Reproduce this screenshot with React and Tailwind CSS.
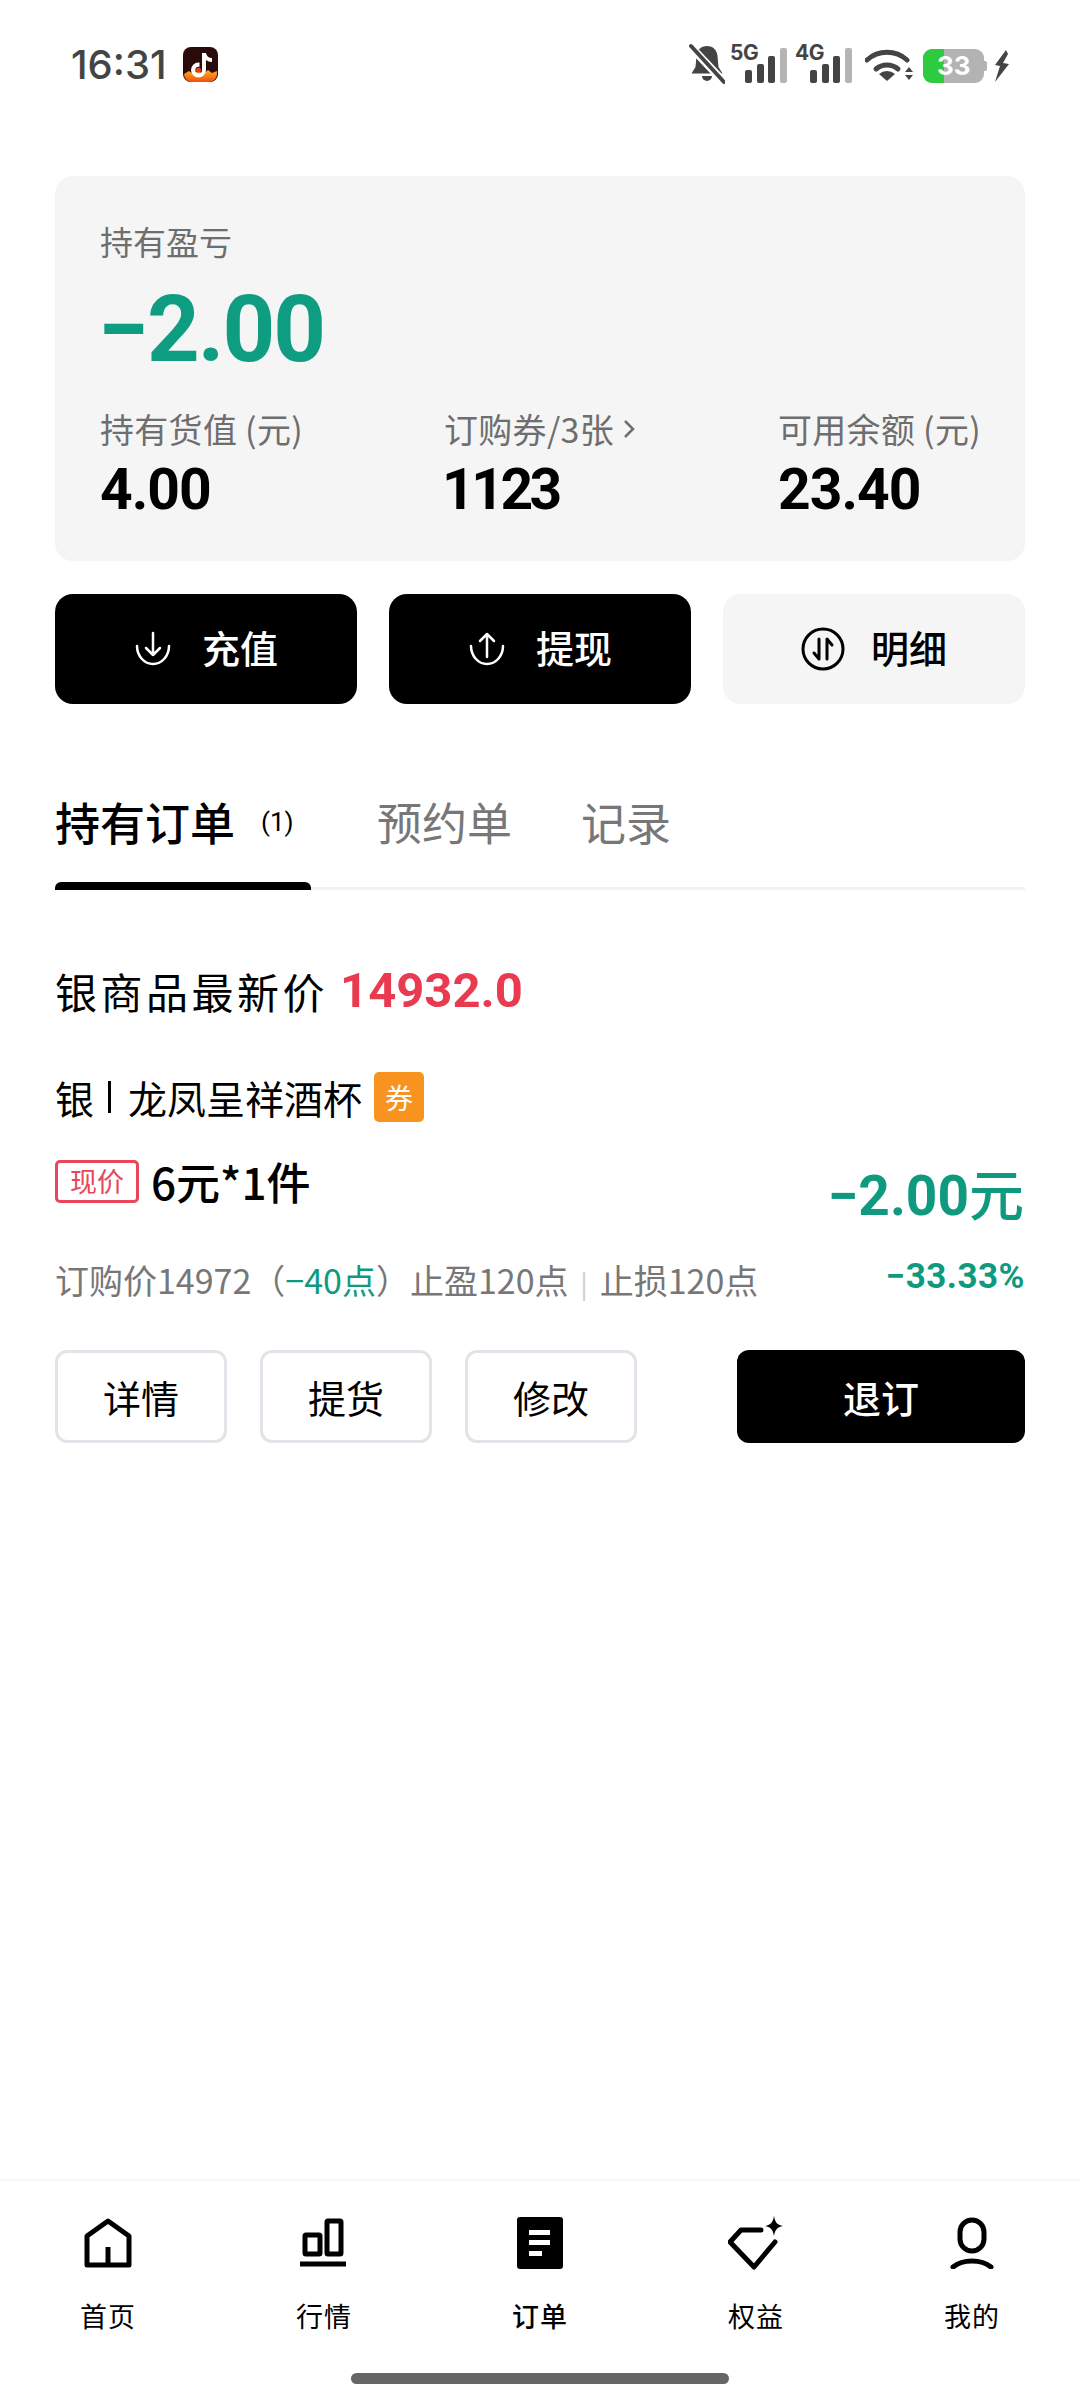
const cjk = { fontFamily: '"Noto Sans CJK SC", sans-serif' };
const num = { fontFamily: 'Roboto, "Noto Sans CJK SC", sans-serif' };

function Signal({ label }) {
  return (
    <svg width="58" height="50" viewBox="0 -8 58 50" className="-mt-[8px]">
      <text x="0" y="17" fontFamily="Inter, sans-serif" fontWeight="700" fontSize="21" letterSpacing="-0.5" fill="#444">{label}</text>
      <rect x="15" y="27" width="7" height="13" rx="2" fill="#444" />
      <rect x="27" y="21" width="7" height="19" rx="2" fill="#444" />
      <rect x="38" y="13" width="7" height="27" rx="2" fill="#444" />
      <rect x="50" y="5" width="7" height="35" rx="2" fill="#b5b5b5" />
    </svg>
  );
}

function StatusBar() {
  return (
    <div className="h-[176px] pt-[42px] pl-[71px] pr-[70px] flex justify-between items-start shrink-0">
      <div className="flex items-center mt-[2px]">
        <span className="text-[40px] leading-[42px] font-medium text-[#444] w-[112px]" style={{ fontFamily: 'Inter, sans-serif' }}>16:31</span>
        <svg width="36" height="38" viewBox="0 0 36 38">
          <defs>
            <linearGradient id="flame" x1="0" y1="0" x2="0" y2="1">
              <stop offset="0" stopColor="#ffb020" /><stop offset="1" stopColor="#f04e10" />
            </linearGradient>
          </defs>
          <rect x="0" y="1" width="35" height="35" rx="8" fill="#2a0a0a" />
          <path d="M1 28l5-3 4 3 5-3 5 3 5-4 4 3 5-2v3a8 8 0 0 1-8 8H9a8 8 0 0 1-8-8z" fill="url(#flame)" />
          <path d="M19 7h4c.5 3 3 5 6 5v4c-2.300 0-4.500-.8-6-2v10a7.500 7.500 0 1 1-7.500-7.500h1v4.200h-1a3.300 3.300 0 1 0 3.500 3.300z" fill="#fff" />
          <circle cx="15.500" cy="24" r="2.500" fill="#e0402a" />
        </svg>
      </div>
      <div className="flex items-center h-[44px]">
        <svg width="36" height="42" viewBox="0 0 36 42" className="mr-[5px]">
          <path d="M18 3c6 0 10 4 10.500 10l1 11 4 6.500H2.500l4-6.500 1-11C8 7 12 3 18 3z" fill="#444" />
          <path d="M13 33a5 5 0 0 0 10 0z" fill="#444" />
          <path d="M1 3l34 36" stroke="#fff" strokeWidth="8" />
          <path d="M2 3l33 36" stroke="#444" strokeWidth="4" strokeLinecap="round" />
        </svg>
        <Signal label="5G" />
        <div className="w-[7px]" />
        <Signal label="4G" />
        <svg width="50" height="36" viewBox="0 0 50 36" className="ml-[12px] mt-[3px]">
          <path d="M2 12a30 30 0 0 1 40 0" fill="none" stroke="#444" strokeWidth="5" strokeLinecap="round" />
          <path d="M11 21a17 17 0 0 1 22 0" fill="none" stroke="#444" strokeWidth="5" strokeLinecap="round" />
          <path d="M22 33l-8-7a12 12 0 0 1 16 0z" fill="#444" />
          <path d="M40 24l4-5 4 5zM40 27l4 5 4-5z" fill="#444" />
        </svg>
        <div className="relative w-[64px] h-[34px] ml-[8px] mt-[3px] flex items-center">
          <div className="w-[61px] h-[34px] rounded-[9px] bg-[#b3b3b3] overflow-hidden">
            <div className="w-[21px] h-full bg-[#2ecb3f]" />
          </div>
          <div className="w-[3px] h-[10px] bg-[#b3b3b3] rounded-r-[2px]" />
          <span className="absolute left-[14px] top-0 text-[26px] leading-[34px] font-bold text-white" style={{ fontFamily: 'Inter, sans-serif' }}>33</span>
        </div>
        <svg width="16" height="32" viewBox="0 0 16 32" className="ml-[7px] mt-[3px]">
          <path d="M12 0L1 15l5 1-5 16 14-18-6-1 5-9z" fill="#444" />
        </svg>
      </div>
    </div>
  );
}

function Stat({ label, value, className, valueClass, chevron }) {
  return (
    <div className={className}>
      <div className="text-[34px] leading-[40px] tracking-[0.3px] text-[#6e6e6e] flex items-center whitespace-nowrap" style={cjk}>
        {label}
        {chevron && (
          <svg width="14" height="24" viewBox="0 0 14 24" className="ml-[8px]">
            <path d="M3 4l8 8-8 8" fill="none" stroke="#6e6e6e" strokeWidth="2.500" />
          </svg>
        )}
      </div>
      <div className={`text-[57px] leading-[60px] font-bold text-black mt-[11px] ${valueClass}`} style={num}>{value}</div>
    </div>
  );
}

function SummaryCard() {
  return (
    <div className="h-[385px] rounded-[18px] bg-[#f5f5f5] pt-[45px] pl-[45px] shrink-0">
      <div className="text-[33px] leading-[40px] text-[#6e6e6e]" style={cjk}>持有盈亏</div>
      <div className="text-[92px] leading-[92px] font-bold text-[#0f9d82] mt-[23px] tracking-[-2px] -ml-[2px]" style={num}>−2.00</div>
      <div className="flex mt-[33px]">
        <Stat label="持有货值 (元)" value="4.00" className="w-[344px]" valueClass="tracking-[-1px]" />
        <Stat label="订购券/3张" value="1123" className="w-[334px]" valueClass="tracking-[-3.5px] -ml-[2px]" chevron />
        <Stat label="可用余额 (元)" value="23.40" valueClass="tracking-[-1px]" />
      </div>
    </div>
  );
}

function ActionButton({ icon, label, dark }) {
  return (
    <div className={`w-[302px] h-[110px] rounded-[18px] flex items-center justify-center ${dark ? 'gap-[30px] bg-black text-white' : 'gap-[26px] bg-[#f5f5f5] text-black'}`}>
      {icon}
      <span className="text-[38px] leading-[44px] font-medium mb-[4px]" style={cjk}>{label}</span>
    </div>
  );
}

function Arc({ children }) {
  return (
    <svg width="38" height="38" viewBox="0 0 38 38" fill="none" stroke="#fff" strokeWidth="2.500" strokeLinecap="round" strokeLinejoin="round">
      <path d="M3 16a16 18 0 1 0 32 0" />
      {children}
    </svg>
  );
}

function Tabs() {
  return (
    <div className="mt-[83px] shrink-0">
      <div className="flex items-center h-[70px]">
        <span className="text-[45px] leading-[50px] font-medium text-black" style={cjk}>持有订单</span>
        <span className="text-[26px] leading-[30px] text-black ml-[26px] w-[34px]" style={num}>(1)</span>
        <span className="text-[45px] leading-[50px] text-[#777] ml-[82px]" style={cjk}>预约单</span>
        <span className="text-[45px] leading-[50px] text-[#777] ml-[69px]" style={cjk}>记录</span>
      </div>
      <div className="relative h-[8px] mt-[25px] flex items-end">
        <div className="w-full h-[3px] bg-[#f2f2f2]" />
        <div className="absolute left-0 top-0 w-[256px] h-[8px] bg-black rounded-t-[6px]" />
      </div>
    </div>
  );
}

function Order() {
  return (
    <div className="shrink-0">
      <div className="mt-[76px] flex items-center h-[50px]">
        <span className="text-[42px] leading-[50px] tracking-[3.500px] text-black" style={cjk}>银商品最新价</span>
        <span className="text-[49px] leading-[50px] font-bold text-[#ea3a50] ml-[12px]" style={num}>14932.0</span>
      </div>
      <div className="mt-[56px] flex items-center h-[50px]">
        <span className="text-[39px] leading-[50px] text-black" style={cjk}>银</span>
        <span className="w-[3px] h-[32px] bg-black ml-[14px] mr-[17px]" />
        <span className="text-[39px] leading-[50px] text-black whitespace-nowrap" style={cjk}>龙凤呈祥酒杯</span>
        <span className="ml-[12px] w-[50px] h-[50px] rounded-[5px] bg-[#f7931e] text-white text-[28px] flex items-center justify-center" style={cjk}>券</span>
      </div>
      <div className="flex justify-between items-start mt-[34px]">
        <div className="flex items-center">
          <span className="w-[84px] h-[43px] rounded-[5px] border-[3px] border-[#e8465a] text-[#e8465a] text-[27px] flex items-center justify-center" style={cjk}>现价</span>
          <span className="ml-[12px] text-[44px] leading-[50px] font-medium text-black" style={cjk}>6元*1件</span>
        </div>
        <span className="text-[55px] leading-[60px] font-bold text-[#0f9a80] mt-[5px] mr-[1px]" style={num}>−2.00<span className="font-medium" style={cjk}>元</span></span>
      </div>
      <div className="flex justify-between items-center mt-[33px] h-[44px]">
        <span className="text-[34px] leading-[44px] text-[#777] whitespace-nowrap" style={cjk}>
          订购价14972（<span className="text-[#0f9a80]">−40点</span>）止盈120点<span className="text-[#ccc] mx-[12px] text-[26px]">|</span>止损120点
        </span>
        <span className="text-[35px] leading-[40px] font-bold text-[#0f9a80] mb-[9px] tracking-[0.5px]" style={num}>−33.33%</span>
      </div>
      <div className="flex items-center mt-[47px]">
        {['详情', '提货', '修改'].map((t) => (
          <div key={t} className="w-[172px] h-[93px] mr-[33px] rounded-[12px] border-[3px] border-[#e3e3ea] flex items-center justify-center text-[38px] text-black" style={cjk}>{t}</div>
        ))}
        <div className="ml-auto w-[288px] h-[93px] rounded-[12px] bg-black text-white flex items-center justify-center text-[38px] font-medium" style={cjk}>退订</div>
      </div>
    </div>
  );
}

function NavItem({ icon, label, bold }) {
  return (
    <div className="flex-1 flex flex-col items-center">
      <div className="h-[56px] w-[56px] flex items-center justify-center">{icon}</div>
      <span className={`mt-[29px] text-[27px] leading-[32px] text-black tracking-[1px] ${bold ? 'font-medium' : ''}`} style={cjk}>{label}</span>
    </div>
  );
}

function BottomNav() {
  const st = { fill: 'none', stroke: '#000', strokeWidth: 5 };
  return (
    <div className="mt-auto border-t-2 border-[#f6f6f6] h-[221px] relative shrink-0 pt-[34px]">
      <div className="flex">
        <NavItem label="首页" icon={
          <svg width="48" height="50" viewBox="0 0 48 50" {...st} strokeLinejoin="round">
            <path d="M3 18L24 3l21 15v29H3z" /><path d="M24 47V29" />
          </svg>} />
        <NavItem label="行情" icon={
          <svg width="48" height="50" viewBox="0 0 48 50" {...st}>
            <rect x="5" y="17" width="15" height="19" rx="1" /><rect x="27" y="3" width="14" height="33" rx="1" /><path d="M0 46h46" />
          </svg>} />
        <NavItem label="订单" bold icon={
          <svg width="46" height="52" viewBox="0 0 46 52">
            <rect width="46" height="52" rx="3" fill="#000" />
            <path d="M12 13h21v5H12zM12 23h21v5H12zM12 34h13v5H12z" fill="#fff" />
          </svg>} />
        <NavItem label="权益" icon={
          <svg width="56" height="54" viewBox="0 0 56 54" {...st} strokeLinecap="round" strokeLinejoin="round">
            <path d="M33 14H13L2 26l24 25 21-25" /><path d="M46 0c1 6 3 9 9 10-6 1-8 4-9 10-1-6-3-9-9-10 6-1 8-4 9-10z" fill="#000" stroke="none" />
          </svg>} />
        <NavItem label="我的" icon={
          <svg width="44" height="52" viewBox="0 0 44 52" {...st} strokeLinecap="round">
            <rect x="10" y="3" width="24" height="31" rx="12" /><path d="M3 50c10-8 28-8 38 0" />
          </svg>} />
      </div>
      <div className="absolute left-[351px] top-[192px] w-[378px] h-[11px] rounded-full bg-[#666]" />
    </div>
  );
}

export default function App() {
  return (
    <div className="w-[1080px] h-[2400px] bg-white flex flex-col overflow-hidden">
      <StatusBar />
      <div className="pl-[55px] pr-[55px] flex flex-col">
        <SummaryCard />
        <div className="flex justify-between mt-[33px] shrink-0">
          <ActionButton dark label="充值" icon={<Arc><path d="M19 3v22M12 18l7 7 7-7" /></Arc>} />
          <ActionButton dark label="提现" icon={<Arc><path d="M19 27V4M12 11l7-7 7 7" /></Arc>} />
          <ActionButton label="明细" icon={
            <svg width="44" height="44" viewBox="0 0 44 44" fill="none" stroke="#000" strokeWidth="3" strokeLinecap="round" strokeLinejoin="round">
              <circle cx="22" cy="22" r="20" /><path d="M18 12v20l-5-6M26 32V12l5 6" />
            </svg>} />
        </div>
        <Tabs />
        <Order />
      </div>
      <BottomNav />
    </div>
  );
}
